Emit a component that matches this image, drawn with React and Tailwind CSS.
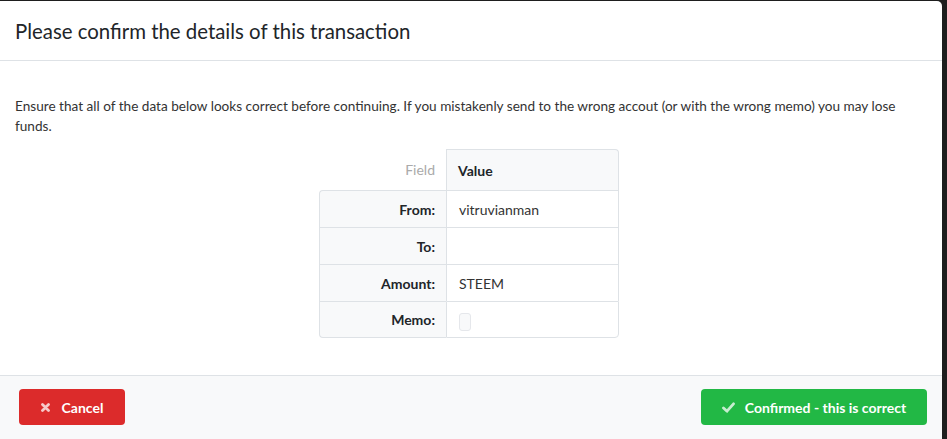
import React from 'react';

const rows = [
  { label: 'From:', value: 'vitruvianman' },
  { label: 'To:', value: '' },
  { label: 'Amount:', value: 'STEEM' },
  { label: 'Memo:', value: null },
];

const App = () => {
  return (
    <div
      className="w-[947px] h-[439px] bg-[#1e1e1e] pt-px pr-[5px] overflow-hidden"
      style={{ fontFamily: 'Lato, "Open Sans", sans-serif' }}
    >
      <div className="bg-white h-[438px] rounded-tr-[5px] flex flex-col text-[#212529]">
        <div className="h-[60px] flex items-center px-[15px] border-b border-[#dee2e6]">
          <h1 className="text-[20.4px] leading-[24px]">Please confirm the details of this transaction</h1>
        </div>

        <div className="flex-1 px-[15px] pt-[35px]">
          <p className="text-[13.6px] leading-[20px] text-[#333]">
            Ensure that all of the data below looks correct before continuing. If you mistakenly send to the wrong accout (or with the wrong memo) you may lose funds.
          </p>

          <div className="flex justify-center mt-[13px] -ml-[4px]">
            <table className="w-[300px] text-[14px] border-separate border-spacing-0">
              <thead>
                <tr className="h-[41px]">
                  <th className="w-[127px] text-right font-normal text-[#aaa] pr-[11px]">Field</th>
                  <th className="text-left font-bold pl-[11px] bg-[#f8f9fa] border border-[#dee2e6] border-b-0 rounded-tr-[4px]">
                    Value
                  </th>
                </tr>
              </thead>
              <tbody>
                {rows.map((r, i) => {
                  const first = i === 0;
                  const last = i === rows.length - 1;
                  return (
                    <tr key={r.label} className="h-[37px]">
                      <td
                        className={`text-right font-bold pr-[11px] bg-[#f8f9fa] border-l border-t border-[#dee2e6] ${first ? 'rounded-tl-[4px]' : ''} ${last ? 'border-b rounded-bl-[4px]' : ''}`}
                      >
                        {r.label}
                      </td>
                      <td
                        className={`pl-[12px] text-[#333] border-l border-r border-t border-[#dee2e6] ${last ? 'border-b rounded-br-[4px]' : ''}`}
                      >
                        {r.value === null ? (
                          <span className="inline-block align-middle w-[12px] h-[18px] mt-[2px] bg-[#f8f9fa] border border-[#e5e7eb] rounded-[3px]" />
                        ) : (
                          r.value
                        )}
                      </td>
                    </tr>
                  );
                })}
              </tbody>
            </table>
          </div>
        </div>

        <div className="h-[64px] bg-[#f8f9fa] border-t border-[#dee2e6] flex items-center justify-between pl-[19px] pr-[15px] pb-[1px]">
          <button className="h-[36px] w-[106px] rounded-[4px] bg-[#dc2b2b] text-white text-[14px] font-bold flex items-center justify-center gap-[12px]">
            <svg width="9" height="9" viewBox="0 0 9 9" className="opacity-75">
              <path d="M1.5 1.5 L7.5 7.5 M7.5 1.5 L1.5 7.5" stroke="#fff" strokeWidth="2.8" strokeLinecap="round" />
            </svg>
            Cancel
          </button>
          <button className="h-[36px] w-[226px] rounded-[4px] bg-[#22b845] text-white text-[14px] font-bold flex items-center justify-center gap-[10px]">
            <svg width="13" height="11" viewBox="0 0 13 11" className="opacity-75">
              <path d="M1.5 6 L5 9.2 L11.5 1.8" stroke="#fff" strokeWidth="2.8" fill="none" strokeLinecap="round" strokeLinejoin="round" />
            </svg>
            Confirmed - this is correct
          </button>
        </div>
      </div>
    </div>
  );
};

export default App;
